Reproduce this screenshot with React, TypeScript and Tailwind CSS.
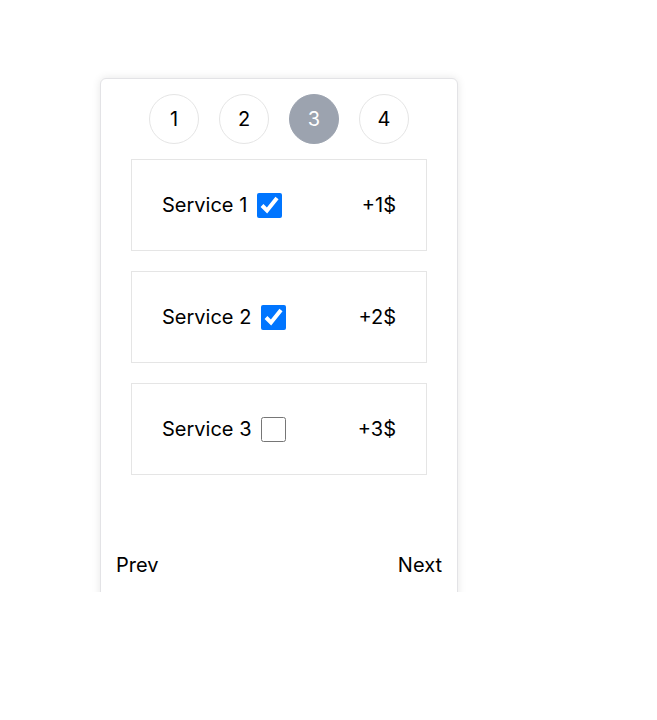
import { useState } from 'react';

const steps = [1, 2, 3, 4];

const services = [
  { name: 'Service 1', price: 1, checked: true },
  { name: 'Service 2', price: 2, checked: true },
  { name: 'Service 3', price: 3, checked: false },
];

function ServiceRow({ name, price, checked }: { name: string; price: number; checked: boolean }) {
  const [on, setOn] = useState(checked);
  return (
    <div className="h-[92px] border border-[#e5e5e5] flex items-center justify-between px-[30px]">
      <label className="flex items-center gap-[10px]">
        <span>{name}</span>
        <input
          type="checkbox"
          checked={on}
          onChange={() => setOn(!on)}
          className="w-[25px] h-[25px] m-0 accent-[#0075ff]"
        />
      </label>
      <span>+{price}$</span>
    </div>
  );
}

export default function App() {
  const active = 3;

  return (
    <div
      className="h-[592px] overflow-hidden bg-white pt-[78px] pl-[100px] text-[20px] leading-[28px] text-black"
      style={{ fontFamily: 'Inter, "Liberation Sans", sans-serif' }}
    >
      <div className="w-[358px] h-[600px] bg-white border border-[#e3e3e6] rounded-[6px] shadow-[0_0_8px_rgba(0,0,0,0.1)] pt-[15px] px-[15px] flex flex-col">
        {/* Step indicator */}
        <div className="flex justify-center gap-[20px]">
          {steps.map((s) => (
            <div
              key={s}
              className={
                s === active
                  ? 'w-[50px] h-[50px] rounded-full bg-[#9ca3af] text-white border border-[#9ca3af] flex items-center justify-center'
                  : 'w-[50px] h-[50px] rounded-full border border-[#e5e5e5] flex items-center justify-center'
              }
            >
              {s}
            </div>
          ))}
        </div>

        {/* Services */}
        <div className="mt-[15px] mx-[15px] flex flex-col gap-[20px]">
          {services.map((s) => (
            <ServiceRow key={s.name} {...s} />
          ))}
        </div>

        {/* Footer */}
        <div className="mt-[76px] flex justify-between">
          <button className="cursor-pointer">Prev</button>
          <button className="cursor-pointer">Next</button>
        </div>
      </div>
    </div>
  );
}
